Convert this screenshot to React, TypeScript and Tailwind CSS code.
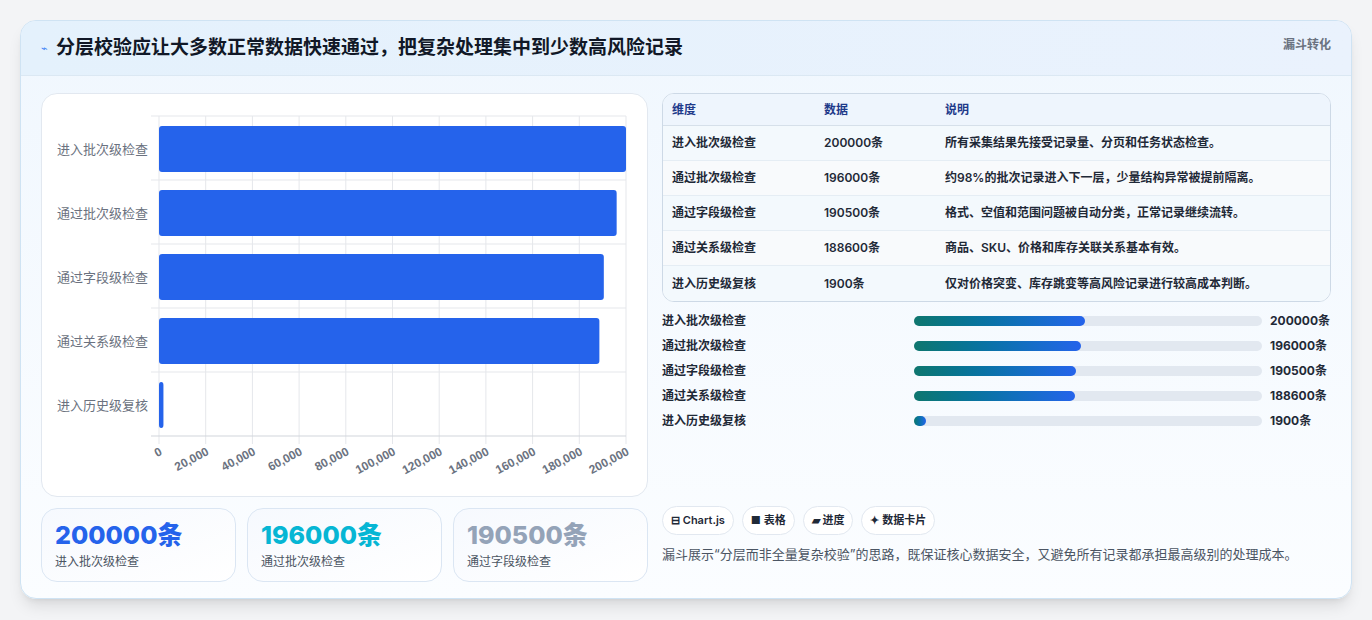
import React from "react";

const rows = [
  ["进入批次级检查", 200000, "所有采集结果先接受记录量、分页和任务状态检查。"],
  ["通过批次级检查", 196000, "约98%的批次记录进入下一层，少量结构异常被提前隔离。"],
  ["通过字段级检查", 190500, "格式、空值和范围问题被自动分类，正常记录继续流转。"],
  ["通过关系级检查", 188600, "商品、SKU、价格和库存关联关系基本有效。"],
  ["进入历史级复核", 1900, "仅对价格突变、库存跳变等高风险记录进行较高成本判断。"],
] as const;

function Chart() {
  const L = 117, R = 584, T = 22, B = 342, W = R - L;
  const ticks = Array.from({ length: 11 }, (_, i) => i * 20000);
  return (
    <svg width="605" height="401" className="block">
      {ticks.map((t) => {
        const x = L + (t / 200000) * W;
        return <line key={t} x1={x} x2={x} y1={T} y2={B + 8} stroke="#e5e7eb" />;
      })}
      {[0, 1, 2, 3, 4, 5].map((i) => (
        <line key={i} x1={L - 8} x2={R} y1={T + i * 64} y2={T + i * 64} stroke={i === 5 ? "#d1d5db" : "#e5e7eb"} />
      ))}
      {rows.map((r, i) => {
        const y = T + i * 64 + 10;
        const w = Math.max(3, (r[1] / 200000) * W);
        return (
          <g key={i}>
            <rect x={L} y={y} width={w} height={46} rx={3} fill="#2563eb" />
            <text x={L - 11} y={y + 28} textAnchor="end" fontSize="13" fill="#6b7280" fontFamily="'Noto Sans CJK SC', sans-serif">{r[0]}</text>
          </g>
        );
      })}
      {ticks.map((t) => {
        const x = L + (t / 200000) * W;
        return (
          <text key={t} x={x + 4} y={B + 18} textAnchor="end" fontSize="12" fontWeight="bold" fill="#6b7280" fontFamily="'Liberation Sans', sans-serif" transform={`rotate(-28 ${x + 4} ${B + 18})`}>
            {t.toLocaleString("en-US")}
          </text>
        );
      })}
    </svg>
  );
}

export default function App() {
  return (
    <div className="w-[1372px] h-[620px] bg-[#f3f4f6] p-5 pb-0" style={{ fontFamily: "Inter, 'Noto Sans CJK SC', sans-serif" }}>
      <div className="h-[579px] rounded-2xl border border-[#cfe3f3] bg-gradient-to-b from-[#f0f7fe] to-[#fbfdff] shadow-lg overflow-hidden">
        <div className="h-[55px] flex items-start justify-between px-5 bg-gradient-to-r from-[#e4f1fc] to-[#eaf2fd] border-b border-[#dbe8f3]">
          <div className="flex items-center gap-2 h-[55px]">
            <span className="text-[#3b82f6] text-[11px]">⌁</span>
            <span className="text-[19px] font-bold text-[#111827]">分层校验应让大多数正常数据快速通过，把复杂处理集中到少数高风险记录</span>
          </div>
          <span className="mt-[15px] text-[12px] font-bold text-[#6b7280]">漏斗转化</span>
        </div>
        <div className="flex gap-[14px] px-5 pt-[17px]">
          <div className="w-[607px] flex flex-col gap-[11px]">
            <div className="h-[404px] rounded-2xl border border-[#e2e8f0] bg-white">
              <Chart />
            </div>
            <div className="grid grid-cols-3 gap-[11px]">
              {[
                ["200000条", "进入批次级检查", "text-[#2563eb]"],
                ["196000条", "通过批次级检查", "text-[#06b6d4]"],
                ["190500条", "通过字段级检查", "text-[#94a3b8]"],
              ].map(([v, l, c]) => (
                <div key={l} className="h-[74px] rounded-2xl border border-[#dbe6f3] bg-gradient-to-br from-[#f6f9fe] to-white px-[13px] pt-[10px]">
                  <div className={`text-[25px] leading-[32px] font-extrabold ${c}`}>{v}</div>
                  <div className="text-[12px] text-[#4b5563] mt-[2px]">{l}</div>
                </div>
              ))}
            </div>
          </div>
          <div className="flex-1 flex flex-col">
            <div className="rounded-xl border border-[#cdd9e6] overflow-hidden bg-white">
              <div className="flex h-[32px] items-center bg-[#eef5fd] border-b border-[#d6e0ea] text-[12px] text-[#1e3a8a] font-semibold">
                <div className="w-[161px] pl-[9px]">维度</div>
                <div className="w-[121px]">数据</div>
                <div>说明</div>
              </div>
              {rows.map((r, i) => (
                <div key={i} className={`flex h-[35px] items-center text-[12px] text-[#1f2937] font-semibold ${i < 4 ? "border-b border-[#e5edf4]" : ""} ${i % 2 ? "bg-[#f8fafc]" : "bg-[#f3f9fd]"}`}>
                  <div className="w-[161px] pl-[9px]">{r[0]}</div>
                  <div className="w-[121px]">{r[1]}条</div>
                  <div>{r[2]}</div>
                </div>
              ))}
            </div>
            <div className="mt-[11px] flex flex-col gap-[9px]">
              {rows.map((r, i) => (
                <div key={i} className="flex items-center h-[16px] text-[12px] font-semibold text-[#1f2937]">
                  <div className="w-[252px]">{r[0]}</div>
                  <div className="w-[348px] h-[10px] rounded-full bg-[#e2e8f0]">
                    <div className="h-[10px] rounded-full bg-gradient-to-r from-[#0f766e] to-[#2563eb]" style={{ width: `${Math.max(3.5, (r[1] / 200000) * 49)}%` }} />
                  </div>
                  <div className="ml-2 font-bold">{r[1]}条</div>
                </div>
              ))}
            </div>
            <div className="mt-auto">
              <div className="flex gap-[8px] text-[11px] font-semibold text-[#1f2937]">
                {["⊟ Chart.js", "■ 表格", "▰ 进度", "✦ 数据卡片"].map((t) => (
                  <span key={t} className="h-[29px] px-[8px] flex items-center rounded-full border border-[#e2e8f0] bg-white">{t}</span>
                ))}
              </div>
              <div className="mt-[10px] mb-[18px] text-[13px] text-[#4b5563]">漏斗展示“分层而非全量复杂校验”的思路，既保证核心数据安全，又避免所有记录都承担最高级别的处理成本。</div>
            </div>
          </div>
        </div>
      </div>
    </div>
  );
}
